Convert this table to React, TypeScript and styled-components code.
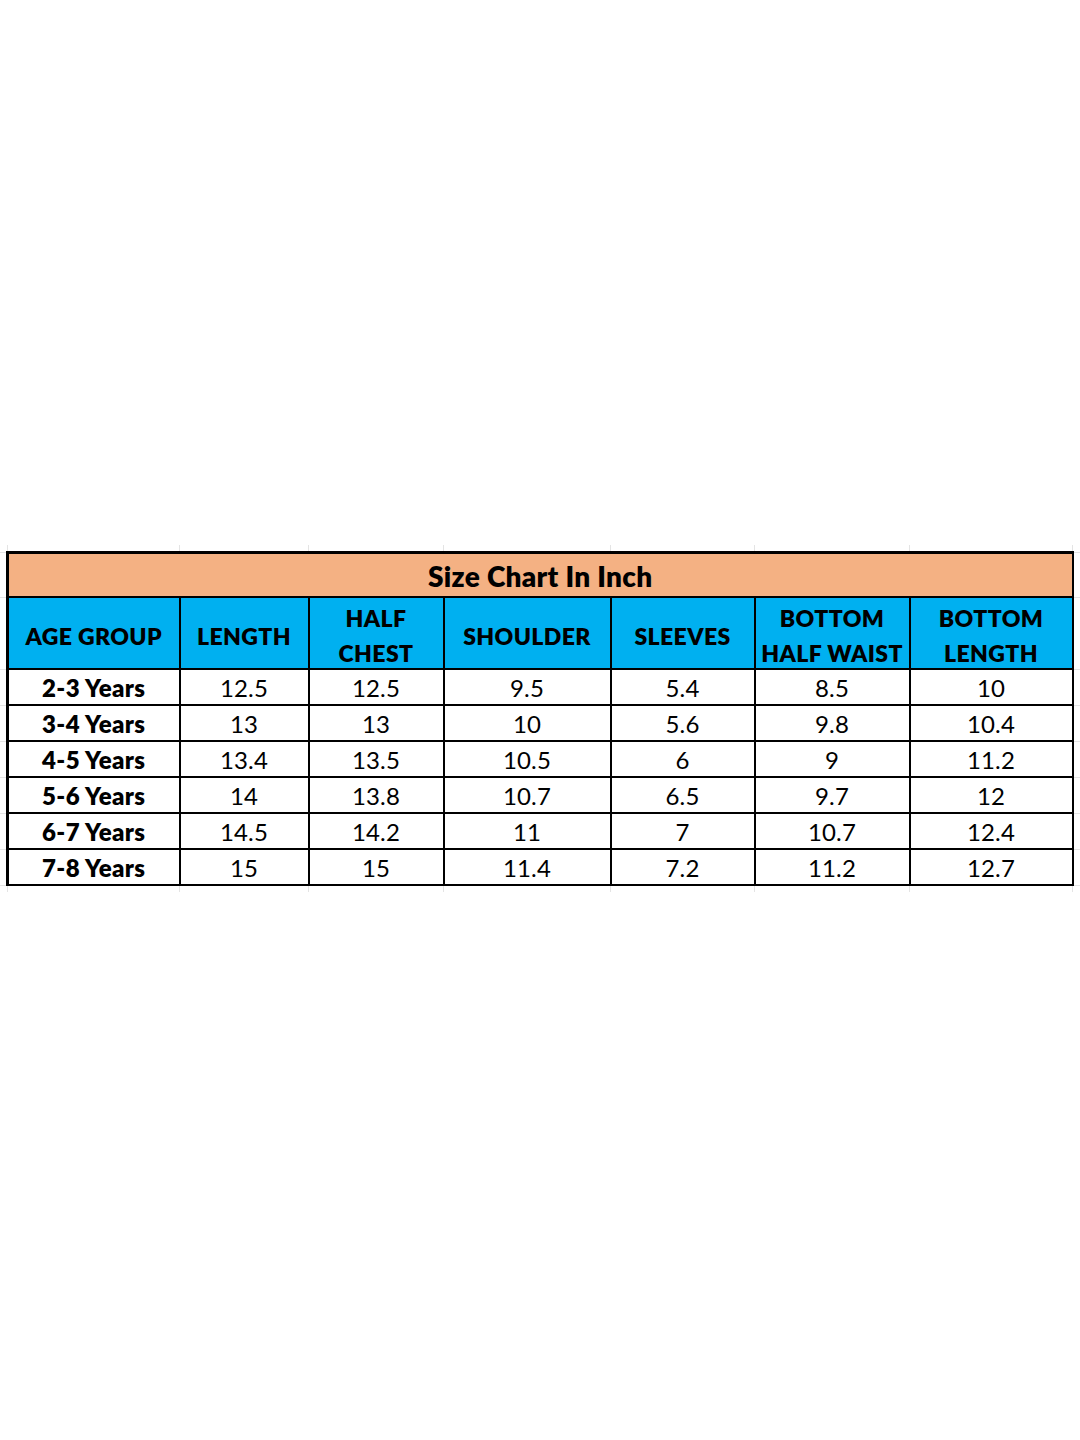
import React from "react";
import styled, { createGlobalStyle } from "styled-components";

const GlobalStyle = createGlobalStyle`
  html, body {
    margin: 0;
    padding: 0;
    background: #ffffff;
  }
  body {
    font-family: Lato, "Open Sans", "Liberation Sans", sans-serif;
  }
`;

const Page = styled.div`
  width: 1080px;
  min-height: 1440px;
  padding-top: 545px;
  box-sizing: border-box;
`;

const Sheet = styled.table`
  border-collapse: collapse;
  table-layout: fixed;
  width: 1080px;
  color: #000;

  tr:first-child > td {
    border-top: none;
  }
  tr:last-child > td {
    border-bottom: none;
  }
  td:first-child {
    border-left-color: transparent;
  }
`;

const GhostCell = styled.td`
  border: 1px solid #e4e4e4;
  padding: 0;
  height: 6px;
`;

const TitleCell = styled.td`
  background: #f4b183;
  border-top: 3px solid #000;
  border-left: 3px solid #000;
  border-right: 2px solid #000;
  border-bottom: 2px solid #000;
  height: 40px;
  padding: 2px 0 0;
  text-align: center;
  font-weight: 800;
  font-size: 28px;
  line-height: 40px;
  letter-spacing: 0.3px;
`;

const HeadCell = styled.td<{ $first?: boolean }>`
  background: #00b0f0;
  border: 2px solid #000;
  border-left-width: ${(p) => (p.$first ? "3px" : "2px")};
  height: 67px;
  padding: 0;
  text-align: center;
  vertical-align: middle;
  font-weight: 800;
  font-size: 23px;
  line-height: 35px;
  white-space: nowrap;
  letter-spacing: 0.4px;
`;

const HeadLine = styled.div`
  position: relative;
  top: 3px;
`;

const DataCell = styled.td<{ $first?: boolean }>`
  border: 2px solid #000;
  border-left-width: ${(p) => (p.$first ? "3px" : "2px")};
  height: 32px;
  padding: 2px 0 0;
  text-align: center;
  vertical-align: middle;
  font-size: 24px;
  font-weight: ${(p) => (p.$first ? 800 : 400)};
  line-height: 32px;
  white-space: nowrap;
  letter-spacing: ${(p) => (p.$first ? "0.4px" : "0.2px")};
`;

const widths = [7, 172, 129, 135, 167, 144, 155, 163, 8];

const headers: string[][] = [
  ["AGE GROUP"],
  ["LENGTH"],
  ["HALF", "CHEST"],
  ["SHOULDER"],
  ["SLEEVES"],
  ["BOTTOM", "HALF WAIST"],
  ["BOTTOM", "LENGTH"],
];

const rows: string[][] = [
  ["2-3 Years", "12.5", "12.5", "9.5", "5.4", "8.5", "10"],
  ["3-4 Years", "13", "13", "10", "5.6", "9.8", "10.4"],
  ["4-5 Years", "13.4", "13.5", "10.5", "6", "9", "11.2"],
  ["5-6 Years", "14", "13.8", "10.7", "6.5", "9.7", "12"],
  ["6-7 Years", "14.5", "14.2", "11", "7", "10.7", "12.4"],
  ["7-8 Years", "15", "15", "11.4", "7.2", "11.2", "12.7"],
];

const GhostRow = () => (
  <tr>
    {widths.map((_, i) => (
      <GhostCell key={i} />
    ))}
  </tr>
);

export default function App() {
  return (
    <>
      <GlobalStyle />
      <Page>
        <Sheet>
          <colgroup>
            {widths.map((w, i) => (
              <col key={i} style={{ width: w }} />
            ))}
          </colgroup>
          <tbody>
            <GhostRow />
            <tr>
              <GhostCell />
              <TitleCell colSpan={7}>Size Chart In Inch</TitleCell>
              <GhostCell />
            </tr>
            <tr>
              <GhostCell />
              {headers.map((lines, i) => (
                <HeadCell key={i} $first={i === 0}>
                  {lines.map((l, j) => (
                    <HeadLine key={j}>{l}</HeadLine>
                  ))}
                </HeadCell>
              ))}
              <GhostCell />
            </tr>
            {rows.map((r, i) => (
              <tr key={i}>
                <GhostCell />
                {r.map((v, j) => (
                  <DataCell key={j} $first={j === 0}>
                    {v}
                  </DataCell>
                ))}
                <GhostCell />
              </tr>
            ))}
            <GhostRow />
          </tbody>
        </Sheet>
      </Page>
    </>
  );
}
